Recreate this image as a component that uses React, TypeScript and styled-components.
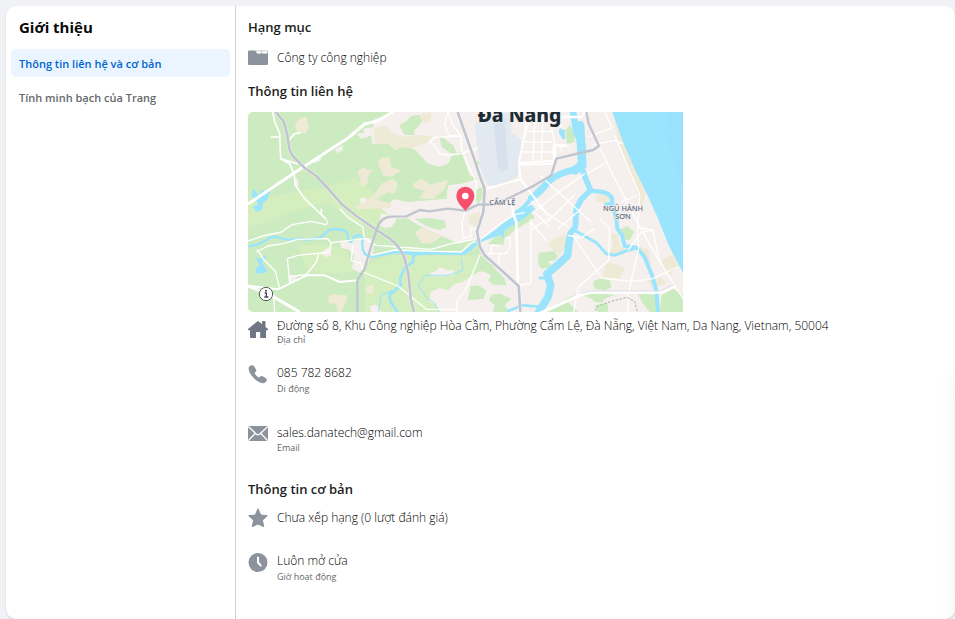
import React from "react";
import styled, { createGlobalStyle } from "styled-components";

const GlobalStyle = createGlobalStyle`
  *, *::before, *::after { box-sizing: border-box; }
  body {
    margin: 0;
    background: #f1f2f6;
    color: #1c1e21;
    font-family: "Open Sans", "Noto Sans", sans-serif;
    font-size: 12px;
    line-height: 16px;
  }
`;

const Page = styled.main`
  min-height: 100vh;
  padding: 6px 0 0 6px;
  display: flex;
  overflow: hidden;
`;

const Card = styled.div`
  flex: 1;
  min-width: 0;
  display: flex;
  background: #fff;
  border-radius: 10px;
  box-shadow: 0 1px 2px rgba(0, 0, 0, 0.15);
`;

const Sidebar = styled.aside`
  flex: 0 0 230px;
  padding: 9px 5px;
  border-right: 1px solid #ced0d4;
`;

const Title = styled.h1`
  margin: 0;
  padding: 0 8px;
  font-size: 15px;
  line-height: 24px;
  font-weight: 700;
  color: #080809;
`;

const Nav = styled.nav`
  display: flex;
  flex-direction: column;
  gap: 6px;
  margin-top: 10px;
`;

const NavLink = styled.a<{ $active?: boolean }>`
  padding: 1px 8px 0;
  border-radius: 5px;
  font-size: 11px;
  line-height: 27px;
  font-weight: 600;
  text-decoration: none;
  white-space: nowrap;
  color: ${(p) => (p.$active ? "#0064d1" : "#65686c")};
  background: ${(p) => (p.$active ? "#ebf5ff" : "transparent")};
`;

const Content = styled.section`
  flex: 1;
  min-width: 0;
  padding: 11px 12px;
`;

const Heading = styled.h2<{ $gap?: number }>`
  margin: ${(p) => p.$gap ?? 0}px 0 0;
  font-size: 13px;
  line-height: 20px;
  font-weight: 600;
`;

const Row = styled.div<{ $gap: number }>`
  display: flex;
  gap: 9px;
  margin-top: ${(p) => p.$gap}px;
`;

const Icon = styled.svg`
  flex: none;
  width: 20px;
  height: 20px;
  fill: #8c939d;
`;

const Value = styled.div<{ $tall?: boolean }>`
  font-weight: 300;
  line-height: ${(p) => (p.$tall ? 20 : 16)}px;
  color: #000;
`;

const Caption = styled.div<{ $gap?: number }>`
  margin-top: ${(p) => p.$gap ?? 0}px;
  font-size: 9px;
  line-height: 12px;
  color: #65686c;
`;

const MapView = styled.svg`
  display: block;
  width: 435px;
  max-width: 100%;
  height: auto;
  margin-top: 11px;
  border-radius: 5px 0 0 5px;
`;

const EdgeShadow = styled.div`
  position: fixed;
  top: 375px;
  bottom: 0;
  left: 100%;
  width: 20px;
  box-shadow: 0 0 20px rgba(0, 0, 0, 0.06);
`;

const ringRoad =
  "M84 0L108 30L118 70L125 115L134 132L170 168L205 192L240 230L280 275L325 312L386 354L425 380Q455 402 470 440L482 490L488 560L498 600";
const airportRoad =
  "M629 0L650 60L675 130L700 205L710 230L706 300L687 358L696 405L710 430L760 475L812 522L817 600";
const crossRoad =
  "M328 600V505L350 470L370 400L386 354Q396 315 430 314L475 313L515 294L545 298L600 290L652 296L692 277L740 278L790 255L860 220L910 190L925 140L1035 114L1053 102L1022 35L1015 0";

function CityMap() {
  return (
    <MapView viewBox="0 0 1305 600" role="img" aria-label="Đà Nẵng">
      <rect width="1305" height="600" fill="#cdebc0" />
      <g fill="#d4eebf">
        <path d="M0 265L110 245L240 225L320 195L400 260L440 310L440 340L380 350L300 320L240 270L160 290L0 350Z" />
        <path d="M150 400L240 395L300 420L320 480L240 485L180 480Z" />
        <path d="M350 460L430 430L690 430L640 600H350Z" />
      </g>
      <path
        fill="#f5f0ed"
        d="M425 0L420 15L380 20L375 45L345 50L350 62L325 66L340 80L370 70L372 95L420 95L445 115L470 110L500 125L540 155L575 165L605 155L610 130L640 120L665 190L690 200L640 215L600 220L595 260L480 270L440 262L400 290L440 320L480 320L520 345L600 380L640 400L688 382L700 430L735 462L728 475L690 480L640 512L650 525L690 520L715 535L708 560L660 565L640 600H1305V0Z"
      />
      <g fill="#f5f0ed">
        <path d="M262 112L283 100L285 115L268 124Z" />
        <path d="M200 138L222 135L215 148L196 153Z" />
        <path d="M138 193L150 205L153 226L142 220Z" />
        <path d="M335 258L355 257L355 272L338 275Z" />
        <path d="M398 305L440 310L445 330L425 355L395 340Z" />
        <path d="M275 388L315 390L345 375L378 382L376 420L362 450L335 482L312 470L318 430L300 412L280 408Z" />
        <path d="M218 425L243 402L250 430L238 436Z" />
        <path d="M124 489L150 492L138 507L122 515Z" />
        <path d="M545 484L568 475L575 465L600 475L620 475L618 488L580 494L550 492Z" />
        <path d="M548 540L575 528L600 535L620 515L650 510L668 525L650 600H580L560 575L545 570Z" />
        <path d="M365 582L385 578L402 600H370Z" />
      </g>
      <g fill="#efead6">
        <path d="M140 38L155 18L176 15L183 48L172 65L148 58Z" />
        <path d="M376 50L415 40L430 60L470 75L520 68L555 75L530 95L500 105L480 120L440 108L420 95L380 92Z" />
        <path d="M520 5L550 0L550 25L530 35L518 20Z" />
        <path d="M330 178L345 165L360 175L375 172L360 192L358 215L340 225Z" />
        <path d="M388 150L405 135L425 138L430 165L460 175L430 195L405 190Z" />
        <path d="M400 215L435 200L450 215L440 245L420 240L380 262L430 275L428 288L330 292L320 285L350 270L380 245Z" />
        <path d="M493 215L520 200L550 215L600 205L590 230L555 262L515 258L530 235L500 232Z" />
        <path d="M500 362L525 345L560 365L585 370L550 395L518 392Z" />
        <path d="M660 310L695 300L700 325L685 345L665 335Z" />
        <path d="M242 552L262 543L270 550L298 550L292 575L280 600H270L265 576L242 572Z" />
        <path d="M352 525L378 520L372 545L358 545Z" />
        <path d="M1045 250L1070 245L1088 262L1075 275L1042 266Z" />
        <path d="M1088 365L1110 365L1118 405L1140 415L1125 428L1085 425L1095 395Z" />
        <path d="M1075 450L1105 455L1130 470L1115 500L1062 498L1070 475Z" />
        <path d="M905 390L950 365L955 400L935 430L905 405Z" />
        <path d="M1170 405L1200 410L1210 455L1190 445Z" />
        <path d="M1245 440L1280 425L1305 450L1265 490L1240 465Z" />
        <path d="M1195 500L1240 495L1255 515L1210 525Z" />
        <path d="M1095 0L1125 80L1160 170L1195 240L1180 290L1165 240L1140 165L1110 85Z" />
      </g>
      <g fill="#cdebc0">
        <path d="M453 40L475 28L490 12L515 8L522 30L500 55L498 70L470 68Z" />
        <path d="M572 70L590 80L615 100L627 125L605 122L582 105Z" />
        <path d="M360 110L410 98L440 115L470 105L500 112L540 155L572 165L600 155L615 132L630 138L635 165L655 170L655 200L620 205L590 195L550 220L520 200L490 220L520 238L510 258L480 262L460 245L470 215L450 205L465 175L435 165L430 140L400 130L370 150Z" />
        <path d="M680 145L693 148L695 158L685 162Z" />
        <path d="M685 232L704 225L705 255L690 275L682 262Z" />
        <path d="M952 55L965 40L978 60L980 90L957 95Z" />
        <path d="M395 350L430 345L445 325L475 318L500 340L520 342L500 365L520 390L480 400L420 395L400 375Z" />
        <path d="M500 320L545 318L590 325L595 345L575 355L540 345Z" />
        <path d="M440 405L560 415L670 385L680 392L650 425L480 418Z" />
        <path d="M720 395L775 345L850 302L860 318L800 355L770 380L765 400Z" />
        <path d="M690 440L735 463L770 500L775 520L735 518L720 505L730 490L698 475Z" />
        <path d="M730 548L755 545L790 560L770 580L785 600H735L740 580L722 565Z" />
        <path d="M872 422L918 417L930 432L922 445L900 448L912 465L880 470L870 455Z" />
        <path d="M1035 508L1060 498L1085 505L1090 525L1072 535L1040 530Z" />
        <path d="M1000 550L1040 540L1100 550L1070 560L1062 572L1040 570L1030 560Z" />
        <path d="M880 600L985 545L960 570L990 600Z" />
        <path d="M1115 352L1140 342L1158 360L1145 385L1122 380Z" />
        <path d="M1170 545L1225 548L1225 600H1205L1185 575Z" />
        <path d="M1240 550L1275 530L1305 550V600H1236Z" />
        <path d="M1040 580L1080 572V600H1050Z" />
      </g>

      <path fill="#e3e9f1" d="M680 40L700 15L790 0L790 60L818 80L820 110L808 195L765 215L720 222L700 180L690 120Z" />
      <path fill="#d8e1ed" d="M735 20L770 20L780 170L765 180L750 165Z" />

      <path fill="#9be4fe" d="M1093 0L1125 90L1164 180L1194 240L1228 315L1262 400L1305 482V0Z" />
      <path fill="#98e2fd" d="M1262 0L1250 55L1305 230V0Z" />
      <g fill="#9be4fe">
        <path d="M15 229L32 248L42 232L52 245L68 232L58 264L45 272L42 294L24 300L16 284L32 276L12 252Z" />
        <path d="M22 434L38 442L50 430L55 435L42 450L58 478L46 484L25 484L22 468L36 462Z" />
        <path d="M935 48L950 55L952 82L945 82L932 62Z" />
        <path d="M690 390L740 355L800 305L850 278L862 290L830 318L770 355L765 382L758 368L705 388Z" />
      </g>
      <g fill="none" stroke="#9be4fe" strokeLinecap="round" strokeLinejoin="round">
        <path strokeWidth="7" d="M0 403Q30 400 52 386Q75 368 95 378Q125 388 155 380Q200 388 228 370Q240 350 262 351L292 356Q302 366 300 382Q310 402 318 374Q338 365 345 380Q338 405 350 425Q365 440 395 430L440 420" />
        <path strokeWidth="11" d="M440 418L500 425L560 422L648 424Q666 412 692 386" />
        <path strokeWidth="20" d="M850 258Q880 240 900 210Q930 182 985 172L1002 150L1005 105L985 60L975 0" />
        <path strokeWidth="12" d="M800 305Q835 285 850 255L900 205" />
        <path strokeWidth="26" d="M996 40L1003 160L980 175" />
        <path strokeWidth="17" d="M1000 165L1015 205L1028 235L1000 262L985 290L982 345L966 365" />
        <path strokeWidth="23" d="M965 380L958 432L930 458L897 485L908 520L900 555L872 600" />
        <path strokeWidth="9" d="M975 352L1015 375L1045 392L1075 425L1100 430L1130 418L1165 408" />
        <path strokeWidth="13" d="M1025 236L1065 240Q1098 248 1092 275L1075 278" />
        <path strokeWidth="12" d="M1092 275L1105 320L1108 350L1122 370L1130 402L1168 408L1190 435L1212 490L1226 540L1230 600" />
        <path strokeWidth="8" d="M497 428L495 450L470 468L456 500L458 520L430 545" />
        <path strokeWidth="8" d="M430 538Q418 555 432 575L448 600M780 597L825 580L872 584" />
        <path strokeWidth="3" d="M640 440L645 475L600 490L530 490L510 520L540 562L560 572L570 598M392 598L400 548L425 540" />
        <path strokeWidth="9" d="M876 498H893" />
      </g>

      <g fill="none" stroke="#fff" strokeLinejoin="round">
        <path strokeWidth="9" d="M0 276L135 185L300 78L350 36L385 28L435 0" />
        <path strokeWidth="5" d="M74 0L80 30L95 65L98 140L125 155L138 185L142 220L170 260L235 322M120 88L140 65L158 62M98 140L150 156M95 75H68M220 290V310" />
        <path strokeWidth="4" d="M0 387L45 372L100 360L132 338L190 328L235 338L240 325M275 290L305 320L345 345L348 375M25 420L60 402L105 395L148 382L238 380L250 392L350 380L385 400L450 405L550 412L610 395L680 382M28 412L45 440L82 478L95 530" />
        <path strokeWidth="4" d="M125 510L118 440L150 430L245 420L250 392M212 425L205 450L175 488L125 493M314 400L310 445L340 455L345 480L450 522L535 592H628" />
        <path strokeWidth="6" d="M0 521L90 532L125 515L175 490L230 490L275 510L328 505" />
        <path strokeWidth="9" d="M0 522L60 545L155 600" />
        <path strokeWidth="4" d="M77 545L80 600M370 430L440 414L560 418L640 420L665 395L685 388M696 428L655 530L628 565L625 600" />
        <path strokeWidth="4" d="M600 0L615 40L640 72L640 110L665 170L685 210L682 260M640 72L603 70L590 35L600 0M640 72L560 76L545 90L560 100L575 125L605 130L640 125L690 108M652 296L642 330L645 378L668 375V348L688 352M700 380L750 340L800 308L830 302" />
        <path strokeWidth="4" d="M730 425V400H760M720 425H775L787 400L785 375L770 380M755 425L752 455" />
        <path strokeWidth="6" d="M715 230L818 202L812 155L832 60L835 0M818 202L865 265L900 310M815 153L920 146M818 158L920 155" />
        <path strokeWidth="8" d="M792 275L797 310L805 330L810 520" />
        <path strokeWidth="4" d="M848 320V514L812 520M848 355L905 315M848 330L895 385M860 300L905 345" />
        <path strokeWidth="4" d="M835 58H915M832 90H915M825 120H915M860 30L855 150M885 20L880 150M830 58L850 20L885 25M920 103H965M940 103V120M910 45L922 100V145M900 0L910 45L945 40" />
        <path strokeWidth="8" d="M918 145V100H955M940 15H1000L1010 0" />
        <path strokeWidth="4" d="M875 190L925 235L980 285L1030 330M865 295L935 238L1010 185M850 268L920 320L960 345M898 330L980 248M930 350L1000 290M960 370L998 378L1040 350" />
        <path strokeWidth="4" d="M1022 75L1070 55L1092 48M1035 98L1100 85L1125 95M1018 185L1078 150M1053 102L1100 200L1145 285L1175 345L1230 440L1305 560M1100 70L1175 250L1168 365L1172 410L1140 550V600M1092 48L1070 0M1120 270L1170 248M1170 345L1215 355" />
        <path strokeWidth="4" d="M1055 320L1085 350L1082 445L990 525L978 600M975 370L1060 498L1150 508L1215 500L1290 465M1140 415L1180 360L1215 355L1235 450" />
        <path strokeWidth="9" d="M875 604L1000 548L1030 541H1240L1282 522" />
      </g>

      <path fill="none" stroke="#c8cbd4" strokeWidth="2" d="M1000 544L1030 537H1238L1278 518" />
      <path fill="none" stroke="#a9abb2" strokeWidth="3" strokeDasharray="7 5" d="M1042 596L1050 582L1090 568L1136 556L1160 568L1168 600" />
      <g fill="none" strokeLinejoin="round">
        <g stroke="#fff" strokeWidth="11" opacity="0.6">
          <path d={ringRoad} />
          <path d={airportRoad} />
        </g>
        <g stroke="#c0c5cf">
          <path strokeWidth="8" d={ringRoad} />
          <path strokeWidth="7" d={crossRoad} />
          <path strokeWidth="8" d={airportRoad} />
        </g>
      </g>

      <g fontFamily="Noto Sans, sans-serif" stroke="#f5f0ed" paintOrder="stroke" strokeLinejoin="round">
        <text x="689" y="30" fontSize="58" fontWeight="800" fill="#1d2b36" strokeWidth="4">Đà Nẵng</text>
        <g fontSize="22" fontWeight="500" fill="#5c6b80" strokeWidth="4" textAnchor="middle">
          <text x="763" y="278">CẨM LỆ</text>
          <text x="1125" y="297">NGŨ HÀNH</text>
          <text x="1125" y="322">SƠN</text>
        </g>
      </g>

      <path fill="#f5506c" d="M652 297C642 283 625 271 625 251A27 27 0 0 1 679 251C679 271 662 283 652 297Z" />
      <circle cx="652" cy="252" r="10" fill="#fff" />
      <circle cx="54" cy="546" r="20" fill="#fff" stroke="#55585d" strokeWidth="3" />
      <path fill="none" stroke="#44474c" strokeWidth="4" d="M50 543H55V555M49 555H61" />
      <circle cx="54" cy="536" r="3" fill="#44474c" />
    </MapView>
  );
}

export default function App() {
  return (
    <>
      <GlobalStyle />
      <Page>
        <Card>
          <Sidebar>
            <Title>Giới thiệu</Title>
            <Nav>
              <NavLink href="#contact" $active aria-current="page">Thông tin liên hệ và cơ bản</NavLink>
              <NavLink href="#transparency">Tính minh bạch của Trang</NavLink>
            </Nav>
          </Sidebar>
          <Content id="contact">
            <Heading>Hạng mục</Heading>
            <Row $gap={11}>
              <Icon viewBox="0 0 20 20" aria-hidden="true">
                <path d="M1 2.5H7.5L8.5 5.2H20V16a1 1 0 0 1-1 1H1a1 1 0 0 1-1-1V3.500a1 1 0 0 1 1-1Z" />
                <path d="M8 2.500H19a1 1 0 0 1 1 1V6H8Z" opacity="0.6" />
                <path fill="#fff" d="M8.300 3.200H13.200V5.400H9ZM14.200 3.200H19V5.400H14.200Z" />
              </Icon>
              <Value $tall>Công ty công nghiệp</Value>
            </Row>
            <Heading $gap={13}>Thông tin liên hệ</Heading>
            <CityMap />
            <Row $gap={6}>
              <Icon viewBox="0 0 20 20" aria-hidden="true">
                <path fill="#6f7785" d="M9.300 3.400a1.200 1.200 0 0 1 1.500 0L14 6V4a1 1 0 0 1 1-1h1.500a1 1 0 0 1 1 1v5L20 11v1.200H18V20H12.200V14H8V20H3A1 1 0 0 1 2 19V12.200H0V11Z" />
              </Icon>
              <div>
                <Value>Đường số 8, Khu Công nghiệp Hòa Cầm, Phường Cẩm Lệ, Đà Nẵng, Việt Nam, Da Nang, Vietnam, 50004</Value>
                <Caption>Địa chỉ</Caption>
              </div>
            </Row>
            <Row $gap={19}>
              <Icon viewBox="0 1 20 20" aria-hidden="true">
                <path d="M1.200 2.700C2.800 1.100 5 .8 6 2.200L8 5.600C8.700 6.800 8 7.800 7 8.600C6.300 9.200 7 10 8.300 11.500C9.700 13 10.700 13.800 11.400 13.200C12.300 12 13.400 11.500 14.600 12.200L18 14.300C19.500 15.300 19 17 17.500 18.300C14.800 20.500 9.800 18.300 6 14.300C1.500 9.700-.5 4.800 1.200 2.700Z" />
              </Icon>
              <div>
                <Value>085 782 8682</Value>
                <Caption $gap={2}>Di động</Caption>
              </div>
            </Row>
            <Row $gap={30}>
              <Icon viewBox="0 1 20 20" aria-hidden="true">
                <rect x="0" y="2" width="20" height="15" rx="1.500" />
                <path fill="none" stroke="#fff" strokeWidth="1.300" d="M0.500 2.800L8.500 10.200Q10 11.400 11.500 10.200L19.500 2.800M0.500 16.500L7.300 9.200M19.500 16.500L12.700 9.200" />
              </Icon>
              <div>
                <Value>sales.danatech@gmail.com</Value>
                <Caption $gap={1}>Email</Caption>
              </div>
            </Row>
            <Heading $gap={25}>Thông tin cơ bản</Heading>
            <Row $gap={9}>
              <Icon viewBox="0 0 20 20" aria-hidden="true">
                <path strokeLinejoin="round" stroke="#8c939d" strokeWidth="1" d="M10 .8L12.700 7L19.300 7.700L14.400 12.200L15.800 18.700L10 16L4.200 18.700L5.600 12.200L.7 7.700L7.300 7Z" />
              </Icon>
              <Value $tall>Chưa xếp hạng (0 lượt đánh giá)</Value>
            </Row>
            <Row $gap={25}>
              <Icon viewBox="0 1 20 20" aria-hidden="true">
                <circle cx="10" cy="10.500" r="9.500" />
                <path fill="none" stroke="#fff" strokeWidth="2" strokeLinecap="round" d="M10 5.500V10.500L12.700 13.500" />
              </Icon>
              <div>
                <Value>Luôn mở cửa</Value>
                <Caption $gap={2}>Giờ hoạt động</Caption>
              </div>
            </Row>
          </Content>
        </Card>
        <EdgeShadow />
      </Page>
    </>
  );
}
